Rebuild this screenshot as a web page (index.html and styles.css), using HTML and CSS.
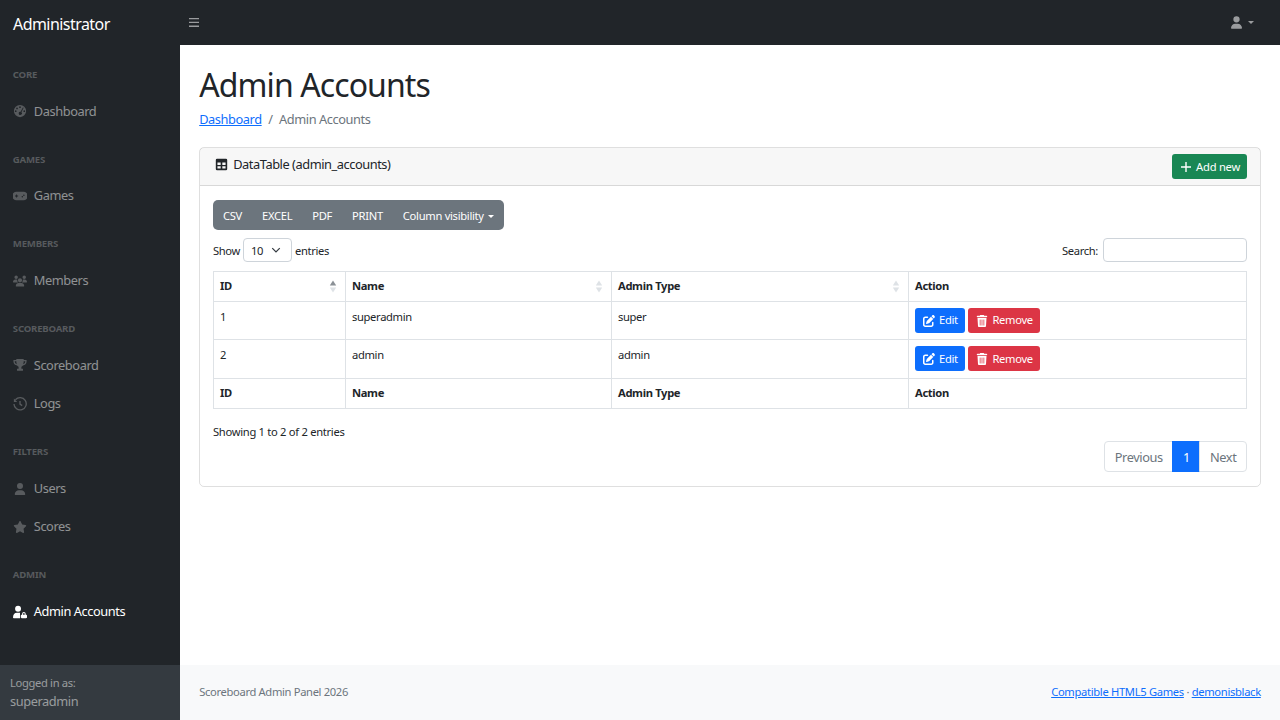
FILE: index.html
```html
<!DOCTYPE html>
<html lang="en">
<head>
  <meta charset="UTF-8">
  <meta name="viewport" content="width=device-width, initial-scale=1.0">
  <title>Admin Accounts</title>
  <link rel="stylesheet" href="styles.css">
</head>
<body>
  <header class="topnav">
    <a class="brand" href="#">Administrator</a>
    <button class="toggle" type="button" aria-label="Toggle sidebar">
      <svg class="ico-bars" viewBox="0 0 10 9"><path d="M0 0h10v1.3H0zM0 3.8h10v1.3H0zM0 7.6h10v1.3H0z"/></svg>
    </button>
    <div class="user-menu">
      <svg class="ico-user" viewBox="0 0 448 512"><path d="M224 256A128 128 0 1 0 224 0a128 128 0 1 0 0 256zm-45.7 48C79.8 304 0 383.8 0 482.3C0 498.7 13.3 512 29.7 512H418.3c16.4 0 29.7-13.3 29.7-29.7C448 383.8 368.2 304 269.7 304H178.3z"/></svg>
      <span class="caret"></span>
    </div>
  </header>

  <div class="layout">
    <aside class="sidenav">
      <nav class="sidenav-menu">
        <div class="menu-heading">Core</div>
        <a class="nav-link" href="#">
          <svg class="nav-icon" viewBox="0 0 16 16"><path fill-rule="evenodd" d="M8 1a7 7 0 1 0 0 14A7 7 0 0 0 8 1zM8 2.6a1 1 0 1 1 0 2 1 1 0 0 1 0-2zM4.6 4a1 1 0 1 1 0 2 1 1 0 0 1 0-2zM3.1 7.2a1 1 0 1 1 0 2 1 1 0 0 1 0-2zM12.9 7.2a1 1 0 1 1 0 2 1 1 0 0 1 0-2zM11.3 3.9l.9.5-2.6 5a1.8 1.8 0 1 1-.9-.5z"/></svg>
          Dashboard
        </a>
        <div class="menu-heading">Games</div>
        <a class="nav-link" href="#">
          <svg class="nav-icon" viewBox="0 0 18 16"><path fill-rule="evenodd" d="M4.500 2.500h9a5 5 0 0 1 0 11h-9a5 5 0 0 1 0-11zM4 6v1.400H2.600v1.200H4V10h1.200V8.600h1.400V7.400H5.200V6zM12 8a1 1 0 1 0 0 2 1 1 0 0 0 0-2zM14 6a1 1 0 1 0 0 2 1 1 0 0 0 0-2z"/></svg>
          Games
        </a>
        <div class="menu-heading">Members</div>
        <a class="nav-link" href="#">
          <svg class="nav-icon" viewBox="0 0 640 512"><path d="M144 0a80 80 0 1 1 0 160A80 80 0 1 1 144 0zM512 0a80 80 0 1 1 0 160A80 80 0 1 1 512 0zM0 298.700C0 239.800 47.800 192 106.700 192h42.700c15.900 0 31 3.500 44.600 9.700-1.300 7.200-1.900 14.700-1.900 22.300 0 38.200 16.800 72.500 43.300 96H21.300C9.600 320 0 310.400 0 298.700zM405.300 320h-.7c26.600-23.500 43.300-57.800 43.300-96 0-7.600-.7-15-1.900-22.300 13.600-6.300 28.700-9.700 44.600-9.700h42.700C592.200 192 640 239.800 640 298.700c0 11.800-9.600 21.300-21.300 21.300H405.300zM224 224a96 96 0 1 1 192 0 96 96 0 1 1-192 0zM128 485.300C128 411.700 187.700 352 261.300 352h117.300C452.300 352 512 411.700 512 485.300c0 14.700-11.900 26.700-26.700 26.700H154.700c-14.700 0-26.700-11.900-26.700-26.700z"/></svg>
          Members
        </a>
        <div class="menu-heading">Scoreboard</div>
        <a class="nav-link" href="#">
          <svg class="nav-icon" viewBox="0 0 16 16"><path fill-rule="evenodd" d="M3.800 1h8.400v1.300H15.500v1.600c0 2.300-1.700 4.200-4.200 4.700-.5.700-1 1.100-1.700 1.400v2.300h1.800V14.500H4.600V12.300h1.800V10c-.7-.3-1.200-.7-1.700-1.400C2.200 8.100.5 6.200.5 3.900V2.300H3.800zM2 3.700v.3c0 1.300.8 2.500 2.300 3.100-.3-1-.5-2.100-.5-3.400zM14 3.700h-1.800c0 1.300-.2 2.400-.5 3.400C13.200 6.500 14 5.300 14 4z"/></svg>
          Scoreboard
        </a>
        <a class="nav-link" href="#">
          <svg class="nav-icon nav-icon-line" viewBox="0 0 16 16"><path d="M2.800 3.200A7 7 0 1 1 1.100 8"/><path class="arrow-head" d="M1 1.800v3.800h3.800z"/><path d="M8 4.500V8.200l2.500 1.600"/></svg>
          Logs
        </a>
        <div class="menu-heading">Filters</div>
        <a class="nav-link" href="#">
          <svg class="nav-icon nav-icon-sm" viewBox="0 0 448 512"><path d="M224 256A128 128 0 1 0 224 0a128 128 0 1 0 0 256zm-45.7 48C79.8 304 0 383.8 0 482.3C0 498.7 13.3 512 29.7 512H418.3c16.4 0 29.7-13.3 29.7-29.7C448 383.8 368.2 304 269.7 304H178.3z"/></svg>
          Users
        </a>
        <a class="nav-link" href="#">
          <svg class="nav-icon nav-icon-sm" viewBox="0 0 576 512"><path d="M316.900 18C311.600 7 300.400 0 288.100 0s-23.400 7-28.800 18L195 150.300 51.400 171.500c-12 1.800-22 10.200-25.700 21.700s-.7 24.200 7.900 32.700L137.800 329 113.200 474.700c-2 12 3 24.200 12.900 31.300s23 8 33.800 2.300l128.300-68.500 128.300 68.500c10.800 5.700 23.900 4.900 33.800-2.300s14.900-19.300 12.900-31.300L438.500 329 542.700 225.900c8.600-8.500 11.700-21.200 7.900-32.700s-13.700-19.900-25.700-21.700L381.200 150.300 316.900 18z"/></svg>
          Scores
        </a>
        <div class="menu-heading">Admin</div>
        <a class="nav-link active" href="#">
          <svg class="nav-icon" viewBox="0 0 18 16"><path fill-rule="evenodd" d="M6.500 0a3.800 3.800 0 1 1 0 7.600A3.800 3.800 0 0 1 6.500 0zM5 9h3c.4 0 .7 0 1 .1V16H1c-.6 0-1-.4-1-1C0 11.600 2 9 5 9zM14 8a2.300 2.300 0 0 1 2.300 2.300V11.500h.5c.6 0 1.200.5 1.200 1.200v2.100c0 .7-.6 1.200-1.200 1.200h-5.600c-.6 0-1.200-.5-1.200-1.200v-2.100c0-.7.6-1.200 1.200-1.200h.5v-1.200A2.300 2.300 0 0 1 14 8zM14 9.300a1 1 0 0 0-1 1v1.200h2v-1.200A1 1 0 0 0 14 9.300z"/></svg>
          Admin Accounts
        </a>
      </nav>
      <div class="sidenav-footer">
        <div class="small">Logged in as:</div>
        superadmin
      </div>
    </aside>

    <div class="content">
      <main class="page">
        <h1>Admin Accounts</h1>
        <ol class="breadcrumb">
          <li><a href="#">Dashboard</a></li>
          <li class="sep">/</li>
          <li class="current">Admin Accounts</li>
        </ol>

        <section class="card">
          <div class="card-header">
            <div class="card-title">
              <svg class="ico-table" viewBox="0 0 16 16"><path fill-rule="evenodd" d="M2.500 1h11A1.500 1.500 0 0 1 15 2.500v11a1.500 1.500 0 0 1-1.500 1.500h-11A1.500 1.500 0 0 1 1 13.500v-11A1.500 1.500 0 0 1 2.500 1zM3 5.500v3h4v-3zM9 5.500v3h4v-3zM3 10v3h4v-3zM9 10v3h4v-3z"/></svg>
              DataTable (admin_accounts)
            </div>
            <a class="btn btn-green" href="#">
              <svg class="ico-btn" viewBox="0 0 12 12"><path d="M5.300 1h1.400v4.300H11v1.400H6.700V11H5.300V6.700H1V5.300h4.300z"/></svg>
              Add new
            </a>
          </div>

          <div class="card-body">
            <div class="export-group">
              <button type="button">CSV</button>
              <button type="button">EXCEL</button>
              <button type="button">PDF</button>
              <button type="button">PRINT</button>
              <button type="button">Column visibility <span class="caret"></span></button>
            </div>

            <div class="table-tools">
              <label class="length">Show
                <span class="select-box">10
                  <svg class="chevron" viewBox="0 0 16 16"><path d="M2 5l6 6 6-6"/></svg>
                </span>
                entries</label>
              <label class="search">Search: <input type="text"></label>
            </div>

            <table class="data-table">
              <colgroup>
                <col class="col-id"><col class="col-name"><col class="col-type"><col>
              </colgroup>
              <thead>
                <tr>
                  <th><div class="th-sort">ID <svg class="sort" viewBox="0 0 8 12"><path class="on" d="M4 0l3.200 5H.8z"/><path d="M4 12L.8 7h6.400z"/></svg></div></th>
                  <th><div class="th-sort">Name <svg class="sort" viewBox="0 0 8 12"><path d="M4 0l3.200 5H.8z"/><path d="M4 12L.8 7h6.400z"/></svg></div></th>
                  <th><div class="th-sort">Admin Type <svg class="sort" viewBox="0 0 8 12"><path d="M4 0l3.200 5H.8z"/><path d="M4 12L.8 7h6.400z"/></svg></div></th>
                  <th>Action</th>
                </tr>
              </thead>
              <tbody>
                <tr>
                  <td>1</td>
                  <td>superadmin</td>
                  <td>super</td>
                  <td class="actions">
                    <a class="btn btn-blue" href="#"><svg class="ico-btn" viewBox="0 0 512 512"><path d="M471.600 21.700c-21.900-21.900-57.300-21.900-79.200 0L362.300 51.700l97.900 97.900 30.100-30.100c21.900-21.900 21.900-57.300 0-79.200L471.600 21.700zm-299.200 220c-6.100 6.100-10.800 13.600-13.500 21.900l-29.600 88.800c-2.900 8.600-.6 18.100 5.800 24.600s15.900 8.700 24.600 5.800l88.800-29.600c8.200-2.700 15.700-7.400 21.900-13.500L437.700 172.300 339.700 74.300 172.400 241.700zM96 64C43 64 0 107 0 160V416c0 53 43 96 96 96H352c53 0 96-43 96-96V320c0-17.700-14.300-32-32-32s-32 14.300-32 32v96c0 17.700-14.300 32-32 32H96c-17.700 0-32-14.300-32-32V160c0-17.700 14.300-32 32-32h96c17.700 0 32-14.300 32-32s-14.300-32-32-32H96z"/></svg> Edit</a>
                    <a class="btn btn-red" href="#"><svg class="ico-btn" viewBox="0 0 448 512"><path d="M135.200 17.700L128 32H32C14.300 32 0 46.300 0 64S14.300 96 32 96H416c17.700 0 32-14.300 32-32s-14.300-32-32-32H320l-7.200-14.300C307.400 6.800 296.300 0 284.200 0H163.800c-12.100 0-23.200 6.800-28.600 17.700zM416 128H32L53.200 467c1.600 25.300 22.600 45 47.900 45H346.900c25.300 0 46.300-19.700 47.900-45L416 128zM144 192c8.800 0 16 7.200 16 16V432c0 8.800-7.200 16-16 16s-16-7.200-16-16V208c0-8.800 7.200-16 16-16zm80 0c8.800 0 16 7.200 16 16V432c0 8.800-7.200 16-16 16s-16-7.200-16-16V208c0-8.800 7.200-16 16-16zm80 0c8.800 0 16 7.200 16 16V432c0 8.800-7.200 16-16 16s-16-7.200-16-16V208c0-8.800 7.200-16 16-16z"/></svg> Remove</a>
                  </td>
                </tr>
                <tr>
                  <td>2</td>
                  <td>admin</td>
                  <td>admin</td>
                  <td class="actions">
                    <a class="btn btn-blue" href="#"><svg class="ico-btn" viewBox="0 0 512 512"><path d="M471.600 21.700c-21.900-21.900-57.300-21.900-79.200 0L362.300 51.700l97.900 97.900 30.100-30.100c21.900-21.900 21.900-57.300 0-79.200L471.600 21.700zm-299.200 220c-6.100 6.100-10.800 13.600-13.500 21.900l-29.600 88.800c-2.900 8.600-.6 18.100 5.800 24.600s15.900 8.700 24.600 5.800l88.800-29.600c8.200-2.700 15.700-7.400 21.900-13.500L437.700 172.300 339.700 74.300 172.400 241.700zM96 64C43 64 0 107 0 160V416c0 53 43 96 96 96H352c53 0 96-43 96-96V320c0-17.700-14.300-32-32-32s-32 14.300-32 32v96c0 17.700-14.300 32-32 32H96c-17.700 0-32-14.300-32-32V160c0-17.700 14.300-32 32-32h96c17.700 0 32-14.300 32-32s-14.300-32-32-32H96z"/></svg> Edit</a>
                    <a class="btn btn-red" href="#"><svg class="ico-btn" viewBox="0 0 448 512"><path d="M135.200 17.700L128 32H32C14.300 32 0 46.300 0 64S14.300 96 32 96H416c17.700 0 32-14.300 32-32s-14.300-32-32-32H320l-7.200-14.300C307.400 6.800 296.300 0 284.200 0H163.800c-12.100 0-23.200 6.800-28.600 17.700zM416 128H32L53.200 467c1.600 25.300 22.600 45 47.900 45H346.900c25.300 0 46.300-19.700 47.900-45L416 128zM144 192c8.800 0 16 7.200 16 16V432c0 8.800-7.200 16-16 16s-16-7.200-16-16V208c0-8.800 7.200-16 16-16zm80 0c8.800 0 16 7.200 16 16V432c0 8.800-7.200 16-16 16s-16-7.200-16-16V208c0-8.800 7.200-16 16-16zm80 0c8.800 0 16 7.200 16 16V432c0 8.800-7.200 16-16 16s-16-7.200-16-16V208c0-8.800 7.200-16 16-16z"/></svg> Remove</a>
                  </td>
                </tr>
              </tbody>
              <tfoot>
                <tr>
                  <th>ID</th>
                  <th>Name</th>
                  <th>Admin Type</th>
                  <th>Action</th>
                </tr>
              </tfoot>
            </table>

            <div class="table-info">Showing 1 to 2 of 2 entries</div>
            <ul class="pagination">
              <li><a href="#">Previous</a></li>
              <li class="active"><a href="#">1</a></li>
              <li><a href="#">Next</a></li>
            </ul>
          </div>
        </section>
      </main>

      <footer class="page-footer">
        <div>Scoreboard Admin Panel 2026</div>
        <div><a href="#">Compatible HTML5 Games</a> · <a href="#">demonisblack</a></div>
      </footer>
    </div>
  </div>
</body>
</html>
```

FILE: styles.css
```css
* {
  margin: 0;
  padding: 0;
  box-sizing: border-box;
}

body {
  height: 100vh;
  display: flex;
  flex-direction: column;
  font-family: "Noto Sans", "Open Sans", sans-serif;
  font-size: 12.8px;
  line-height: 1.5;
  letter-spacing: -0.42px;
  color: #212529;
  background-color: #fff;
  overflow: hidden;
}

a {
  color: #0d6efd;
}

svg {
  fill: currentColor;
}

.caret {
  display: inline-block;
  width: 0;
  height: 0;
  margin-left: 2px;
  vertical-align: 2px;
  border-top: 3.5px solid;
  border-left: 3.5px solid transparent;
  border-right: 3.5px solid transparent;
}

/* top bar */
.topnav {
  height: 45px;
  flex: none;
  display: flex;
  align-items: center;
  background-color: #212529;
}

.brand {
  width: 180px;
  padding: 2px 0 0 13px;
  font-size: 16px;
  letter-spacing: -0.55px;
  color: #fff;
  text-decoration: none;
}

.toggle {
  margin-left: 9px;
  display: flex;
  border: none;
  background: none;
  color: rgba(255, 255, 255, 0.55);
}

.ico-bars {
  width: 10px;
  height: 9px;
}

.user-menu {
  margin-left: auto;
  margin-right: 26px;
  display: flex;
  align-items: center;
  gap: 4px;
  color: rgba(255, 255, 255, 0.55);
}

.ico-user {
  width: 11px;
  height: 13px;
}

/* sidebar */
.layout {
  flex: 1;
  display: flex;
  min-height: 0;
}

.sidenav {
  width: 180px;
  flex: none;
  display: flex;
  flex-direction: column;
  background-color: #212529;
}

.sidenav-menu {
  flex: 1;
  padding-top: 0.6px;
}

.menu-heading {
  padding: 22.4px 12.8px 9.6px;
  font-size: 9.6px;
  font-weight: 700;
  letter-spacing: -0.2px;
  text-transform: uppercase;
  color: rgba(255, 255, 255, 0.25);
}

.nav-link {
  display: flex;
  align-items: center;
  gap: 7px;
  padding: 9.6px 12.8px;
  color: rgba(255, 255, 255, 0.5);
  text-decoration: none;
}

.nav-link.active {
  color: #fff;
}

.nav-icon {
  width: 14px;
  height: 14px;
  flex: none;
  color: rgba(255, 255, 255, 0.25);
}

.nav-icon-sm {
  height: 12px;
}

.nav-link.active .nav-icon {
  color: #fff;
}

.nav-icon-line {
  fill: none;
  stroke: currentColor;
  stroke-width: 1.5;
}

.nav-icon-line .arrow-head {
  fill: currentColor;
  stroke: none;
}

.sidenav-footer {
  height: 55px;
  padding: 9.6px 10px;
  background-color: #343a40;
  color: rgba(255, 255, 255, 0.5);
}

.sidenav-footer .small {
  margin-bottom: 1px;
  font-size: 11.2px;
  letter-spacing: -0.34px;
}

/* content */
.content {
  flex: 1;
  min-width: 0;
  display: flex;
  flex-direction: column;
}

.page {
  flex: 1;
  padding: 0 19.2px;
}

h1 {
  margin-top: 21px;
  font-size: 32px;
  font-weight: 400;
  line-height: 1.2;
  letter-spacing: -0.9px;
}

.breadcrumb {
  display: flex;
  gap: 6.5px;
  margin: 6px 0 17px;
  list-style: none;
}

.breadcrumb .sep,
.breadcrumb .current {
  color: #6c757d;
}

.card {
  border: 1px solid rgba(0, 0, 0, 0.125);
  border-radius: 5px;
}

.card-header {
  height: 38.5px;
  display: flex;
  align-items: center;
  justify-content: space-between;
  padding: 0 12.8px 0 15px;
  background-color: rgba(0, 0, 0, 0.03);
  border-bottom: 1px solid rgba(0, 0, 0, 0.125);
}

.card-title {
  display: flex;
  align-items: center;
  gap: 5px;
  margin-top: -4px;
  letter-spacing: -0.44px;
}

.ico-table {
  width: 13px;
  height: 13px;
}

.btn {
  display: inline-flex;
  align-items: center;
  gap: 4px;
  height: 25px;
  padding: 1px 7px 0 8px;
  border-radius: 3px;
  font-size: 11.2px;
  letter-spacing: -0.3px;
  color: #fff;
  text-decoration: none;
}

.ico-btn {
  width: 12px;
  height: 12px;
}

.btn-green {
  margin-top: 1px;
  background-color: #198754;
  padding-left: 8.5px;
  letter-spacing: -0.24px;
}

.btn-blue {
  background-color: #0d6efd;
}

.btn-red {
  margin-left: 1px;
  background-color: #dc3545;
}

.card-body {
  padding: 13.5px 12.8px 14px;
}

.export-group {
  display: inline-flex;
  height: 30px;
  background-color: #6c757d;
  border-radius: 5px;
  overflow: hidden;
}

.export-group button {
  padding: 1px 10px 0;
  border: none;
  background: none;
  color: #fff;
  font-family: inherit;
  font-size: 11.2px;
  letter-spacing: -0.3px;
}

.table-tools {
  display: flex;
  align-items: center;
  justify-content: space-between;
  margin: 8px 0 9px;
  font-size: 11.2px;
  letter-spacing: -0.34px;
}

.length,
.search {
  display: flex;
  align-items: flex-start;
  height: 24px;
  gap: 3px;
  line-height: 26px;
}

.search {
  gap: 5px;
}

.select-box {
  width: 49px;
  height: 24px;
  display: flex;
  align-items: center;
  justify-content: space-between;
  padding: 2px 10px 0 7px;
  border: 1px solid #ced4da;
  border-radius: 4px;
}

.chevron {
  width: 10px;
  height: 10px;
  margin-top: -2px;
  fill: none;
  stroke: #343a40;
  stroke-width: 2;
}

.search input {
  width: 144px;
  height: 24px;
  border: 1px solid #ced4da;
  border-radius: 4px;
}

.data-table {
  width: 100%;
  table-layout: fixed;
  border-collapse: collapse;
  font-size: 11.2px;
  letter-spacing: -0.34px;
}

.col-id {
  width: 132px;
}

.col-name {
  width: 266px;
}

.col-type {
  width: 297px;
}

.data-table th,
.data-table td {
  height: 30px;
  padding: 0 6px;
  border: 1px solid #dee2e6;
  text-align: left;
  vertical-align: middle;
}

.data-table td {
  height: 38.5px;
  padding-bottom: 6px;
}

.data-table td.actions {
  padding-bottom: 0;
}

.th-sort {
  display: flex;
  align-items: center;
  justify-content: space-between;
  padding-right: 2px;
}

.sort {
  width: 8px;
  height: 13px;
  color: #dee2e6;
}

.sort .on {
  fill: #8a9096;
}

.table-info {
  margin-top: 15px;
  font-size: 11.2px;
  letter-spacing: -0.3px;
}

.pagination {
  display: flex;
  justify-content: flex-end;
  margin-top: 1px;
  list-style: none;
}

.pagination a {
  display: block;
  height: 31px;
  padding: 0 9.6px;
  line-height: 31px;
  color: #6c757d;
  text-decoration: none;
  border: 1px solid #dee2e6;
}

.pagination li + li a {
  margin-left: -1px;
}

.pagination li:first-child a {
  border-radius: 4px 0 0 4px;
}

.pagination li:last-child a {
  border-radius: 0 4px 4px 0;
}

.pagination .active a {
  background-color: #0d6efd;
  border-color: #0d6efd;
  color: #fff;
}

/* footer */
.page-footer {
  height: 55px;
  flex: none;
  display: flex;
  align-items: center;
  justify-content: space-between;
  padding: 0 19.2px;
  background-color: #f8f9fa;
  color: #6c757d;
  font-size: 11.2px;
  letter-spacing: -0.34px;
}

.page-footer a {
  letter-spacing: -0.32px;
}
```
